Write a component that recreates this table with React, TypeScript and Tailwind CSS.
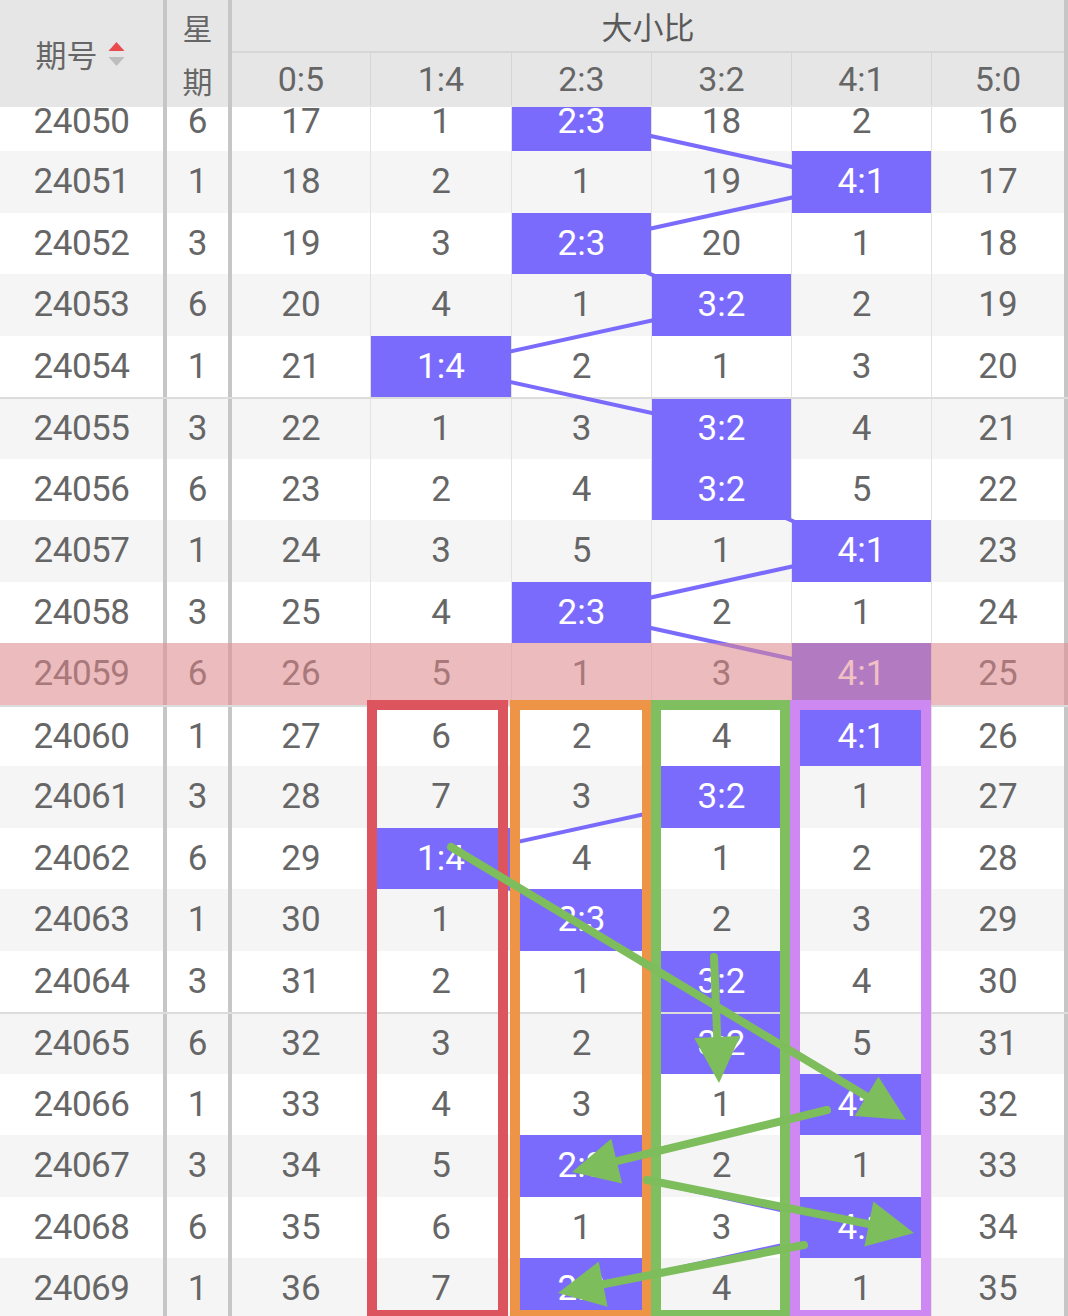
import React from "react";

const PURPLE = "#7b6bfd";

const rows: [number, number, (number | string)[]][] = [
  [24050, 6, [17, 1, "2:3", 18, 2, 16]],
  [24051, 1, [18, 2, 1, 19, "4:1", 17]],
  [24052, 3, [19, 3, "2:3", 20, 1, 18]],
  [24053, 6, [20, 4, 1, "3:2", 2, 19]],
  [24054, 1, [21, "1:4", 2, 1, 3, 20]],
  [24055, 3, [22, 1, 3, "3:2", 4, 21]],
  [24056, 6, [23, 2, 4, "3:2", 5, 22]],
  [24057, 1, [24, 3, 5, 1, "4:1", 23]],
  [24058, 3, [25, 4, "2:3", 2, 1, 24]],
  [24059, 6, [26, 5, 1, 3, "4:1", 25]],
  [24060, 1, [27, 6, 2, 4, "4:1", 26]],
  [24061, 3, [28, 7, 3, "3:2", 1, 27]],
  [24062, 6, [29, "1:4", 4, 1, 2, 28]],
  [24063, 1, [30, 1, "2:3", 2, 3, 29]],
  [24064, 3, [31, 2, 1, "3:2", 4, 30]],
  [24065, 6, [32, 3, 2, "3:2", 5, 31]],
  [24066, 1, [33, 4, 3, 1, "4:1", 32]],
  [24067, 3, [34, 5, "2:3", 2, 1, 33]],
  [24068, 6, [35, 6, 1, 3, "4:1", 34]],
  [24069, 1, [36, 7, "2:3", 4, 1, 35]],
];

const ROW_H = 61.5;
const fillCenters = [301, 441, 581.5, 721.5, 861.5, 998];

const colClasses = [
  "w-[138px]",
  "w-[141px] border-l border-[#e2e2e2]",
  "w-[140px] border-l border-[#e2e2e2]",
  "w-[140px] border-l border-[#e2e2e2]",
  "w-[140px] border-l border-[#e2e2e2]",
  "w-[133px] border-l border-[#e2e2e2]",
];
const headColClasses = [
  "w-[138px]",
  "w-[141px] border-l border-[#d5d5d5]",
  "w-[140px] border-l border-[#d5d5d5]",
  "w-[140px] border-l border-[#d5d5d5]",
  "w-[140px] border-l border-[#d5d5d5]",
  "w-[133px] border-l border-[#d5d5d5]",
];
const headLabels = ["0:5", "1:4", "2:3", "3:2", "4:1", "5:0"];

const arrows = [
  { x1: 451, y1: 847, x2: 906, y2: 1120 },
  { x1: 714, y1: 957, x2: 719, y2: 1083 },
  { x1: 827, y1: 1110, x2: 572, y2: 1172 },
  { x1: 647, y1: 1180, x2: 914, y2: 1233 },
  { x1: 804, y1: 1245, x2: 558, y2: 1293 },
];

function arrowGeom(a: { x1: number; y1: number; x2: number; y2: number }) {
  const dx = a.x2 - a.x1;
  const dy = a.y2 - a.y1;
  const L = Math.hypot(dx, dy);
  const ux = dx / L;
  const uy = dy / L;
  const hl = 46;
  const hw = 23;
  const bx = a.x2 - ux * hl;
  const by = a.y2 - uy * hl;
  const px = -uy;
  const py = ux;
  return {
    pts: `${a.x2},${a.y2} ${bx + px * hw},${by + py * hw} ${bx - px * hw},${by - py * hw}`,
    lx: a.x2 - ux * (hl - 4),
    ly: a.y2 - uy * (hl - 4),
  };
}

function SortIcon() {
  return (
    <svg width="18" height="28" viewBox="0 0 18 28" className="ml-[10px] mt-[2px]">
      <polygon points="0.5,10 8.5,1 16.5,10" fill="#e84a4d" />
      <polygon points="0.5,16 8.5,25 16.5,16" fill="#bdbdbd" />
    </svg>
  );
}

export default function App() {
  const purpleCells: { x: number; y: number }[] = rows.map((r, i) => {
    const idx = r[2].findIndex((v) => typeof v === "string");
    return { x: fillCenters[idx], y: i * ROW_H + ROW_H / 2 };
  });

  return (
    <div className="relative w-[1068px] h-[1316px] overflow-hidden bg-white font-['Roboto','Noto_Sans_CJK_SC',sans-serif] text-[#666]">
      {/* Header */}
      <div className="flex h-[107px] bg-[#e6e6e6]">
        <div className="w-[163px] flex items-center justify-center pr-[2px]">
          <span className="text-[31px] leading-none text-[#666] font-['Noto_Sans_CJK_SC',sans-serif]">期号</span>
          <SortIcon />
        </div>
        <div className="w-[4px] bg-[#c6c6c6]" />
        <div className="w-[61px] flex flex-col items-center text-[30px] leading-none text-[#666] font-['Noto_Sans_CJK_SC',sans-serif]">
          <div className="h-[53px] flex items-center">星</div>
          <div className="h-[54px] flex items-center">期</div>
        </div>
        <div className="w-[4px] bg-[#c6c6c6]" />
        <div className="w-[832px] flex flex-col">
          <div className="h-[53px] flex items-center justify-center border-b-2 border-[#d6d6d6] text-[31px] leading-none text-[#5a5a5a] font-['Noto_Sans_CJK_SC',sans-serif]">
            大小比
          </div>
          <div className="flex h-[52px]">
            {headLabels.map((l, i) => (
              <div
                key={l}
                className={`${headColClasses[i]} flex items-center justify-center text-[34px] leading-none font-normal`}
              >
                {l}
              </div>
            ))}
          </div>
        </div>
        <div className="w-[4px] bg-[#c6c6c6]" />
      </div>

      {/* Body */}
      <div className="relative h-[1209px] overflow-hidden">
        <div className="relative -mt-[17.5px]">
          {rows.map((r, i) => {
            const [id, wd, cells] = r;
            const gray = i % 2 === 1;
            const divider = id % 5 === 0;
            return (
              <div
                key={id}
                className={`flex h-[61.5px] ${gray ? "bg-[#f5f5f5]" : "bg-white"} ${
                  divider ? "border-t-2 border-[#dcdcdc]" : ""
                }`}
              >
                <div className="w-[163px] flex items-center justify-center text-[35px] leading-none font-normal tracking-[-0.5px]">
                  {id}
                </div>
                <div className="w-[4px] bg-[#c6c6c6]" />
                <div className="w-[61px] flex items-center justify-center text-[35px] leading-none font-normal">
                  {wd}
                </div>
                <div className="w-[4px] bg-[#c6c6c6]" />
                {cells.map((v, ci) => {
                  const isP = typeof v === "string";
                  return (
                    <div key={ci} className={`${colClasses[ci]} flex`}>
                      <div
                        className={`flex-1 flex items-center justify-center text-[35px] leading-none font-normal ${
                          isP ? "relative z-[1] bg-[#7b6bfd] text-white" : ""
                        }`}
                      >
                        {v}
                      </div>
                    </div>
                  );
                })}
                <div className="w-[4px] bg-[#c6c6c6]" />
              </div>
            );
          })}

          {/* connecting lines */}
          <svg className="absolute left-0 top-0 pointer-events-none" width="1068" height={rows.length * ROW_H}>
            {purpleCells.slice(1).map((p, i) => {
              const q = purpleCells[i];
              return (
                <line key={i} x1={q.x} y1={q.y} x2={p.x} y2={p.y} stroke={PURPLE} strokeWidth="4" />
              );
            })}
          </svg>

          {/* current row highlight */}
          <div className="absolute left-0 right-0 top-[553.5px] h-[61.5px] z-[2] bg-[rgba(227,136,140,0.53)]" />
        </div>
      </div>

      {/* Annotations */}
      <svg className="absolute left-0 top-0 z-[3] pointer-events-none" width="1068" height="1316">
        <rect x="372" y="705" width="131" height="610" fill="none" stroke="#dc545d" strokeWidth="10" />
        <rect x="515" y="705" width="132" height="610" fill="none" stroke="#ee9446" strokeWidth="10" />
        <rect x="656" y="705" width="129" height="610" fill="none" stroke="#80bf60" strokeWidth="10" />
        <rect x="795" y="705" width="131" height="610" fill="none" stroke="#cd88f2" strokeWidth="10" />
        {arrows.map((a, i) => {
          const g = arrowGeom(a);
          return (
            <g key={i}>
              <line x1={a.x1} y1={a.y1} x2={g.lx} y2={g.ly} stroke="#7dbd5b" strokeWidth="8" strokeLinecap="round" />
              <polygon points={g.pts} fill="#7dbd5b" />
            </g>
          );
        })}
      </svg>
    </div>
  );
}
